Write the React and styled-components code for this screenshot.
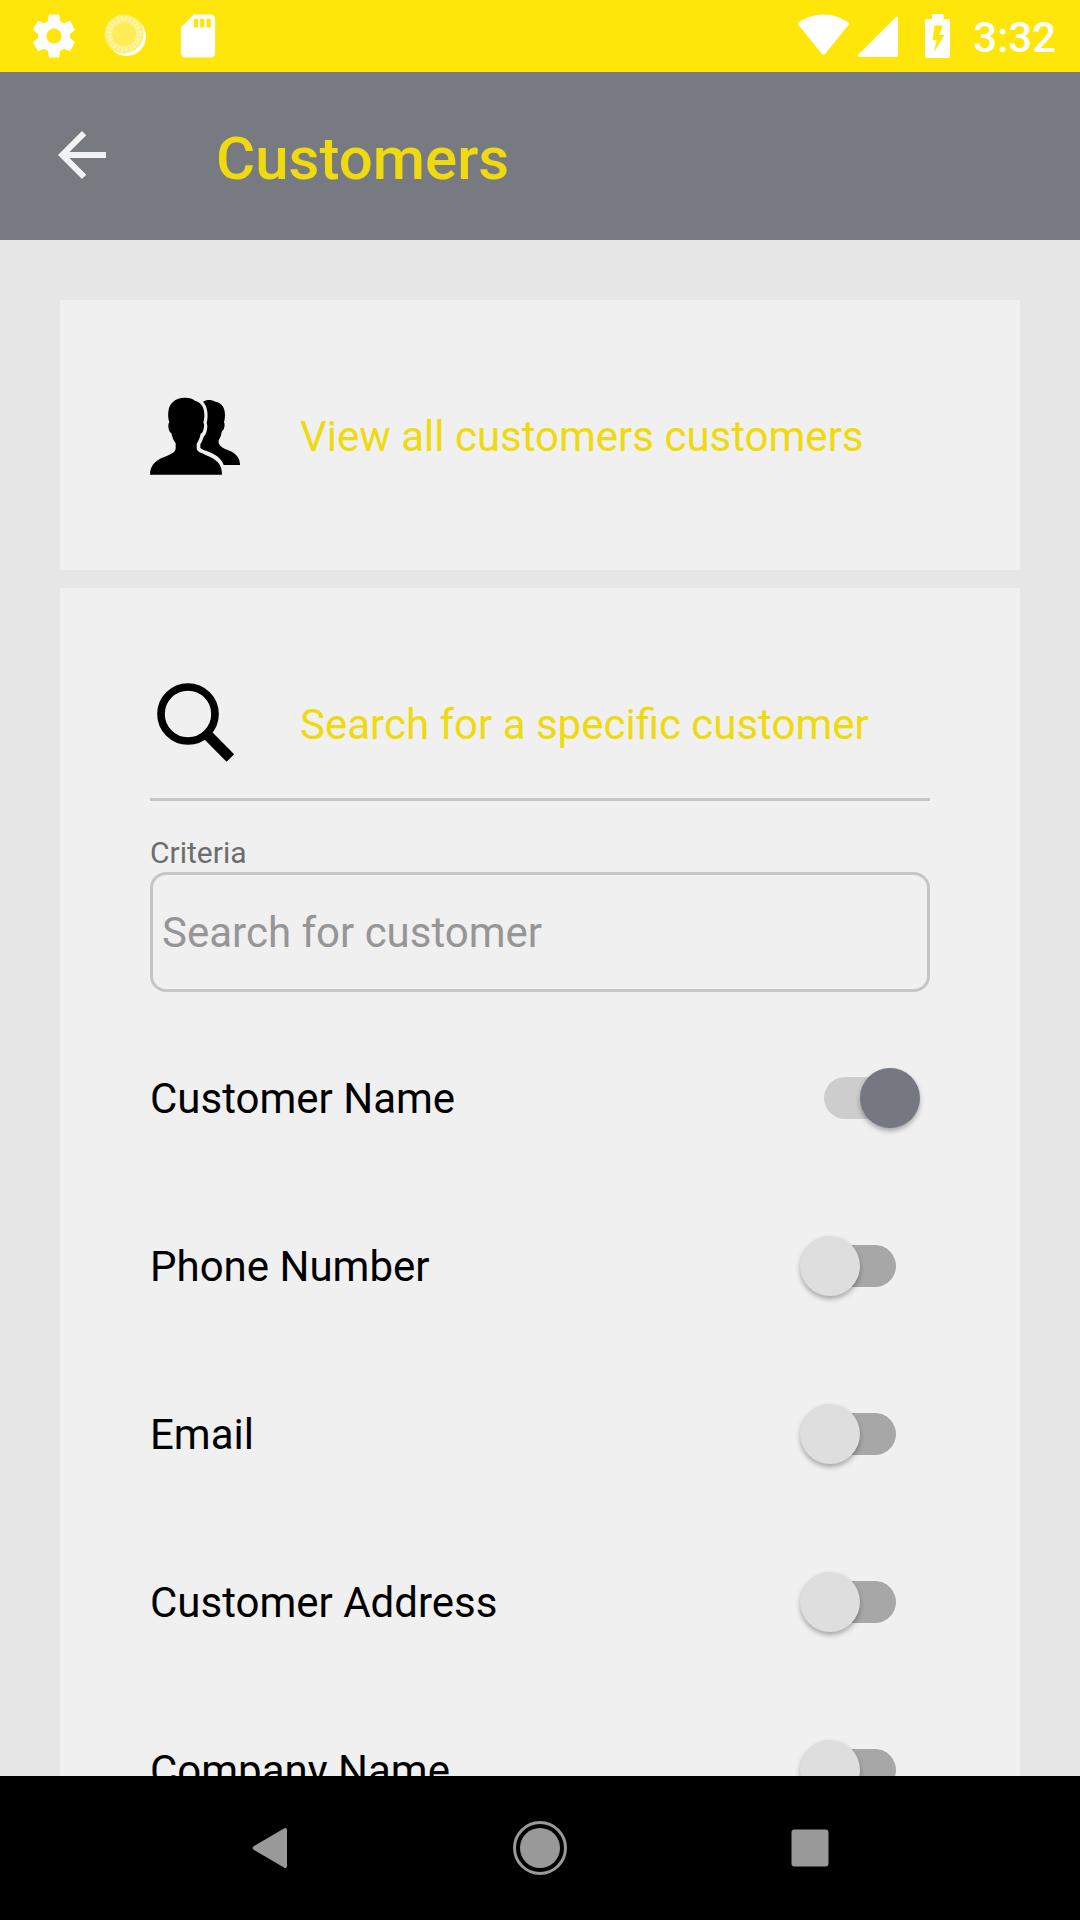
import React, { useState } from 'react';
import styled, { createGlobalStyle, ThemeProvider } from 'styled-components';

const theme = {
  colors: {
    status: '#ffe60a',
    bar: '#787a82',
    accent: '#efd90f',
    page: '#e6e6e6',
    card: '#f0f0f0',
    line: '#c6c6c6',
    nav: '#999999',
  },
};

const GlobalStyle = createGlobalStyle`
  * {
    box-sizing: border-box;
  }
  body {
    margin: 0;
    font-family: Roboto, sans-serif;
    font-size: 42px;
    color: #000;
  }
`;

const Screen = styled.div`
  height: 100vh;
  display: flex;
  flex-direction: column;
  background-color: ${(props) => props.theme.colors.page};
`;

const StatusBar = styled.div`
  flex: none;
  height: 72px;
  padding: 0 24px 0 18px;
  display: flex;
  align-items: center;
  justify-content: space-between;
  color: #fff;
  background-color: ${(props) => props.theme.colors.status};
`;

const StatusGroup = styled.div`
  display: flex;
  align-items: center;
`;

const StatusIcon = styled.svg`
  display: block;
  width: ${(props) => props.$width}px;
  height: 72px;
`;

const Clock = styled.time`
  font-weight: 500;
  line-height: 48px;
  padding: 4px 0 0 12px;
`;

const AppBar = styled.header`
  flex: none;
  height: 168px;
  padding: 0 46px 2px;
  display: flex;
  align-items: center;
  gap: 98px;
  background-color: ${(props) => props.theme.colors.bar};
`;

const BackButton = styled.button`
  width: 72px;
  height: 72px;
  padding: 0;
  border: 0;
  background: none;
  color: #f2f2f5;
  svg {
    display: block;
  }
`;

const Title = styled.h1`
  margin: 0;
  padding-top: 8px;
  font-size: 60px;
  line-height: 72px;
  font-weight: 500;
  color: ${(props) => props.theme.colors.accent};
`;

const Content = styled.main`
  flex: 1;
  min-height: 0;
  padding: 60px;
  overflow-y: auto;
  scrollbar-width: none;
`;

const Card = styled.section`
  padding: 90px;
  background-color: ${(props) => props.theme.colors.card};
  & + & {
    margin-top: 18px;
  }
`;

const CardHeading = styled.h2`
  margin: 0;
  display: flex;
  align-items: center;
  gap: 60px;
  font-size: 42px;
  line-height: 48px;
  font-weight: 400;
  color: ${(props) => props.theme.colors.accent};
`;

const CardLink = styled.a`
  display: flex;
  align-items: center;
  gap: 60px;
  color: inherit;
  text-decoration: none;
`;

const CardTitle = styled.span`
  padding-top: 4px;
`;

const CardIcon = styled.svg`
  flex: none;
  display: block;
  width: 90px;
  height: 90px;
  color: #000;
`;

const Divider = styled.hr`
  height: 3px;
  margin: 30px 0 33px;
  border: 0;
  background-color: ${(props) => props.theme.colors.line};
`;

const FieldLabel = styled.label`
  display: block;
  font-size: 30px;
  line-height: 38px;
  color: #6d6d6d;
`;

const SearchInput = styled.input`
  display: block;
  width: 100%;
  height: 120px;
  margin-bottom: 22px;
  padding: 0 9px;
  border: 3px solid ${(props) => props.theme.colors.line};
  border-radius: 16px;
  background: none;
  font: inherit;
  &::placeholder {
    color: #969696;
    opacity: 1;
  }
`;

const OptionRow = styled.div`
  height: 168px;
  padding-right: 10px;
  display: flex;
  align-items: center;
  justify-content: space-between;
`;

const Switch = styled.input.attrs({ type: 'checkbox', role: 'switch' })`
  appearance: none;
  width: 72px;
  height: 42px;
  margin: 0 24px;
  border-radius: 21px;
  background-color: #a7a7a7;
  &::before {
    content: '';
    display: block;
    width: 60px;
    height: 60px;
    margin: -9px 0 0 -24px;
    border-radius: 50%;
    background-color: #dedede;
    box-shadow: 0 3px 5px rgba(0, 0, 0, 0.3);
  }
  &:checked {
    background-color: #cdcdce;
  }
  &:checked::before {
    margin-left: 36px;
    background-color: #767881;
  }
`;

const NavBar = styled.nav`
  flex: none;
  height: 144px;
  padding: 0 12.5%;
  display: flex;
  background-color: #000;
`;

const NavButton = styled.button`
  flex: 1;
  display: flex;
  align-items: center;
  justify-content: center;
  padding: 0;
  border: 0;
  background: none;
  color: ${(props) => props.theme.colors.nav};
`;

const options = [
  { id: 'name', label: 'Customer Name' },
  { id: 'phone', label: 'Phone Number' },
  { id: 'email', label: 'Email' },
  { id: 'address', label: 'Customer Address' },
  { id: 'company', label: 'Company Name' },
];

function Spinner() {
  return (
    <StatusIcon $width={72} viewBox="0 0 72 72" aria-hidden="true">
      <circle cx="36.5" cy="36.5" r="19.5" fill="#fff" />
      <circle cx="34" cy="34" r="19.5" fill="#ffef70" />
      <circle
        cx="34"
        cy="34"
        r="15"
        fill="none"
        stroke="#fff5a6"
        strokeWidth="6"
        strokeDasharray="2.6 1.33"
      />
      <circle cx="34" cy="34" r="12" fill="#ffec58" />
    </StatusIcon>
  );
}

function PhoneStatus() {
  return (
    <StatusBar>
      <StatusGroup>
        <StatusIcon $width={72} viewBox="-4.8 -4.8 33.6 33.6" fill="currentColor" aria-hidden="true">
          <path d="M19.43 12.98c.04-.32.07-.64.07-.98s-.03-.66-.07-.98l2.11-1.65c.19-.15.24-.42.12-.64l-2-3.46c-.12-.22-.39-.3-.61-.22l-2.49 1c-.52-.4-1.08-.73-1.69-.98l-.38-2.65C14.46 2.18 14.25 2 14 2h-4c-.25 0-.46.18-.49.42l-.38 2.65c-.61.25-1.17.59-1.69.98l-2.49-1c-.23-.09-.49 0-.61.22l-2 3.46c-.13.22-.07.49.12.64l2.11 1.65c-.04.32-.07.65-.07.98s.03.66.07.98l-2.11 1.65c-.19.15-.24.42-.12.64l2 3.46c.12.22.39.3.61.22l2.49-1c.52.4 1.08.73 1.69.98l.38 2.65c.03.24.24.42.49.42h4c.25 0 .46-.18.49-.42l.38-2.65c.61-.25 1.17-.59 1.69-.98l2.49 1c.23.09.49 0 .61-.22l2-3.46c.12-.22.07-.49-.12-.64l-2.11-1.65zM12 15.5c-1.93 0-3.5-1.57-3.5-3.5s1.57-3.5 3.5-3.5 3.5 1.57 3.5 3.5-1.57 3.5-3.5 3.5z" />
        </StatusIcon>
        <Spinner />
        <StatusIcon $width={72} viewBox="-4.8 -4.8 33.6 33.6" fill="currentColor" aria-hidden="true">
          <path d="M18 2h-8L4.02 8 4 20c0 1.1.9 2 2 2h12c1.1 0 2-.9 2-2V4c0-1.1-.9-2-2-2zm-6 6h-2V4h2v4zm3 0h-2V4h2v4zm3 0h-2V4h2v4z" />
        </StatusIcon>
      </StatusGroup>
      <StatusGroup>
        <StatusIcon $width={54} viewBox="796 0 54 72" fill="currentColor" aria-hidden="true">
          <path d="M798.5 22.5C806 17.5 814 14.5 823.5 14.5S841 17.5 848.5 22.5q1 1 0 2.5L825 54q-1.5 1.5-3 0L798.5 25q-1-1.5 0-2.5z" />
        </StatusIcon>
        <StatusIcon $width={66} viewBox="850 0 66 72" fill="currentColor" aria-hidden="true">
          <path d="M895.5 17.5q2.5-2 2.5 1V55q0 2-2 2h-36q-3 0-1.5-2.5z" />
        </StatusIcon>
        <StatusIcon $width={45} viewBox="916 0 45 72" aria-hidden="true">
          <path
            fill="currentColor"
            fillRule="evenodd"
            d="M932 14h11.500v5H948q2 0 2 2v35q0 2-2 2h-21q-2 0-2-2V21q0-2 2-2h5zM934.5 25.500L932.5 40h4L934 52l10.500-17H939l4-9.500z"
          />
        </StatusIcon>
        <Clock>3:32</Clock>
      </StatusGroup>
    </StatusBar>
  );
}

function CustomersIcon() {
  return (
    <CardIcon viewBox="60 30 270 270" fill="currentColor" aria-hidden="true">
      <path d="M60 284C60 250 85 237 110 228C130 220 137 214 137 205V190C130 181 127 172 124 160C117 156 115 145 115 137Q115 129 118 127C114 115 114 105 115 95C117 70 135 53 165 53C180 53 188 56 195 62C212 66 223 80 223 105C223 115 222 120 220 128C223 131 223 138 221 146C219 154 217 159 212 161C209 175 205 183 200 191V205C200 213 210 218 225 224C260 238 276 250 276 284Z" />
      <path d="M219 65C230 58 245 58 256 65C275 68 285 82 285 105C285 113 284 120 282 127C285 132 284 139 282 145C281 149 279 152 276 153C274 165 270 175 266 181V190C270 200 280 206 293 210C320 220 330 235 330 255H281C275 235 255 222 230 213C220 209 212 206 211 203V193C215 187 218 180 221 170C229 163 231 150 232 140C232 135 231 132 230 129C233 118 233 105 232 95C230 80 225 72 219 65Z" />
    </CardIcon>
  );
}

function SearchIcon() {
  return (
    <CardIcon viewBox="60 54 270 270" fill="none" stroke="currentColor" aria-hidden="true">
      <circle cx="174" cy="162" r="81" strokeWidth="23" />
      <path d="M229 221L301 294" strokeWidth="32" />
    </CardIcon>
  );
}

function SearchOptions() {
  const [selected, setSelected] = useState('name');

  return options.map((option) => (
    <OptionRow key={option.id}>
      <label htmlFor={option.id}>{option.label}</label>
      <Switch
        id={option.id}
        checked={selected === option.id}
        onChange={() => setSelected(option.id)}
      />
    </OptionRow>
  ));
}

function PhoneNav() {
  return (
    <NavBar>
      <NavButton aria-label="Back">
        <svg width="54" height="54" viewBox="0 0 54 54" fill="currentColor">
          <path d="M11 25L41 7.500Q44 6 44 9V45Q44 48 41 46.500L11 29Q8 27 11 25Z" />
        </svg>
      </NavButton>
      <NavButton aria-label="Home">
        <svg width="54" height="54" viewBox="0 0 54 54">
          <circle cx="27" cy="27" r="20" fill="currentColor" />
          <circle cx="27" cy="27" r="25.5" fill="none" stroke="currentColor" strokeWidth="3" />
        </svg>
      </NavButton>
      <NavButton aria-label="Recent apps">
        <svg width="54" height="54" viewBox="0 0 54 54" fill="currentColor">
          <rect x="8.5" y="8.5" width="37" height="37" rx="3" />
        </svg>
      </NavButton>
    </NavBar>
  );
}

export default function App() {
  const [query, setQuery] = useState('');

  return (
    <ThemeProvider theme={theme}>
      <GlobalStyle />
      <Screen>
        <PhoneStatus />
        <AppBar>
          <BackButton aria-label="Go back">
            <svg width="72" height="72" viewBox="0 0 24 24" fill="currentColor">
              <path d="M20 11H7.83l5.59-5.59L12 4l-8 8 8 8 1.41-1.41L7.83 13H20v-2z" />
            </svg>
          </BackButton>
          <Title>Customers</Title>
        </AppBar>
        <Content>
          <Card>
            <CardHeading>
              <CardLink href="#customers">
                <CustomersIcon />
                <CardTitle>View all customers customers</CardTitle>
              </CardLink>
            </CardHeading>
          </Card>
          <Card>
            <CardHeading>
              <SearchIcon />
              <CardTitle>Search for a specific customer</CardTitle>
            </CardHeading>
            <Divider />
            <FieldLabel htmlFor="criteria">Criteria</FieldLabel>
            <SearchInput
              id="criteria"
              type="text"
              placeholder="Search for customer"
              value={query}
              onChange={(e) => setQuery(e.target.value)}
            />
            <SearchOptions />
          </Card>
        </Content>
        <PhoneNav />
      </Screen>
    </ThemeProvider>
  );
}
